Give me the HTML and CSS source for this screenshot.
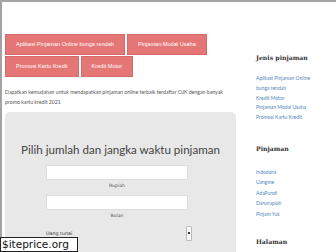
FILE: index.html
```html
<!DOCTYPE html>
<html lang="id">
<head>
<meta charset="utf-8">
<title>Pinjaman</title>
<link rel="stylesheet" href="styles.css">
</head>
<body>
<div class="page">
  <main class="main">
    <nav class="tags">
      <a class="tag" href="#">Aplikasi Pinjaman Online bunga rendah</a>
      <a class="tag" href="#">Pinjaman Modal Usaha</a>
      <a class="tag" href="#">Promosi Kartu Kredit</a>
      <a class="tag" href="#">Kredit Motor</a>
    </nav>
    <p class="intro">Dapatkan kemudahan untuk mendapatkan pinjaman online terbaik terdaftar OJK dengan banyak promo kartu kredit 2021</p>
    <section class="calc">
      <h2 class="calc-title">Pilih jumlah dan jangka waktu pinjaman</h2>
      <div class="field">
        <div class="input"></div>
        <div class="label">Rupiah</div>
      </div>
      <div class="field">
        <div class="input"></div>
        <div class="label">Bulan</div>
      </div>
      <div class="select">
        <span>Uang tunai</span>
        <span class="arrow"><i></i></span>
      </div>
    </section>
  </main>
  <aside class="sidebar">
    <h3 class="side-title">Jenis pinjaman</h3>
    <ul class="links">
      <li><a href="#">Aplikasi Pinjaman Online bunga rendah</a></li>
      <li><a href="#">Kredit Motor</a></li>
      <li><a href="#">Pinjaman Modal Usaha</a></li>
      <li><a href="#">Promosi Kartu Kredit</a></li>
    </ul>
    <h3 class="side-title">Pinjaman</h3>
    <ul class="links links-b">
      <li><a href="#">Indodana</a></li>
      <li><a href="#">Uangme</a></li>
      <li><a href="#">AdaPundi</a></li>
      <li><a href="#">Danarupiah</a></li>
      <li><a href="#">Pinjam Yuk</a></li>
    </ul>
    <h3 class="side-title">Halaman</h3>
  </aside>
</div>
<div class="watermark">$iteprice.org</div>
</body>
</html>
```
FILE: styles.css
```css
html, body {
  margin: 0;
  padding: 0;
  background: #fff;
  overflow: hidden;
}
body {
  width: 336px;
  height: 252px;
  font-family: Lato, "Open Sans", sans-serif;
}
.page {
  display: flex;
  border-top: 2px solid #a3a3a3;
  border-left: 2px solid #a3a3a3;
  height: 250px;
  box-sizing: border-box;
}
.main {
  width: 231px;
  margin-left: 3px;
  flex: none;
}
.tags {
  display: flex;
  flex-wrap: wrap;
  gap: 1px 2px;
  margin-top: 32px;
  width: 215px;
}
.tag {
  display: block;
  height: 19px;
  line-height: 19px;
  padding: 0 10px;
  background: #e57676;
  border: 0.5px solid #d66a6a;
  color: #fff;
  font-size: 5.6px;
  text-decoration: none;
  font-family: "Liberation Sans", Arial, sans-serif;
}
.intro {
  margin: 10px 0 0;
  font-size: 5.2px;
  line-height: 10px;
  color: #555;
}
.calc {
  margin-top: 5px;
  background: #e8e8e8;
  border-radius: 5px;
  height: 150px;
  padding-top: 30px;
  box-sizing: border-box;
}
.calc-title {
  margin: 0;
  text-align: center;
  font-weight: 400;
  font-size: 11.6px;
  line-height: 16px;
  color: #444;
}
.field {
  width: 142px;
  margin: 0 0 0 41px;
}
.field:first-of-type { margin-top: 7px; }
.input {
  height: 15px;
  background: #fff;
  border: 0.5px solid #ddd;
  box-sizing: border-box;
}
.label {
  text-align: center;
  font-size: 4.6px;
  line-height: 12px;
  color: #555;
  font-family: "DejaVu Sans", sans-serif;
  margin-bottom: 3px;
}
.select {
  width: 146px;
  margin: 0 0 0 41px;
  display: flex;
  align-items: center;
  justify-content: space-between;
  font-size: 4.8px;
  color: #333;
  font-family: "DejaVu Sans", sans-serif;
  height: 16px;
}
.arrow {
  width: 6px;
  height: 15px;
  background: #fafafa;
  border: 0.5px solid #bbb;
  border-radius: 1px;
  display: flex;
  align-items: center;
  justify-content: center;
  box-sizing: border-box;
}
.arrow i {
  width: 1.5px;
  height: 1.5px;
  background: #333;
}
.sidebar {
  margin-left: 14px;
  padding-left: 6px;
  width: 66px;
  flex: none;
}
.side-title {
  margin: 51px 0 0;
  font-family: "DejaVu Serif", "Liberation Serif", serif;
  font-size: 6.2px;
  line-height: 10px;
  font-weight: 700;
  color: #333;
}
.links {
  list-style: none;
  margin: 11px 0 0;
  padding: 0;
  font-size: 5px;
  line-height: 9.8px;
}
.links a {
  color: #5583c2;
  text-decoration: none;
}
.links + .side-title { margin-top: 21px; }
.links-b { margin-top: 13px; line-height: 10.5px; }
.links-b + .side-title { margin-top: 18px; }
.watermark {
  position: fixed;
  left: 0;
  bottom: 0;
  width: 75px;
  height: 13px;
  border: 1px solid #222;
  background: #fff;
  color: #111;
  font-family: "DejaVu Sans", sans-serif;
  font-size: 10.5px;
  line-height: 13px;
  padding-left: 1px;
}
```
